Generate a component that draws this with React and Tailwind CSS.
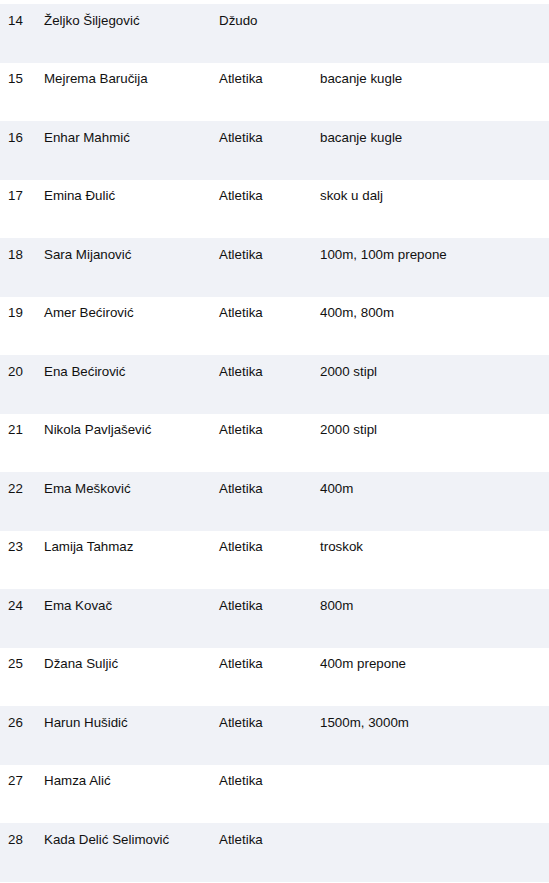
import React from "react";

const rows = [
  ["14", "Željko Šiljegović", "Džudo", ""],
  ["15", "Mejrema Baručija", "Atletika", "bacanje kugle"],
  ["16", "Enhar Mahmić", "Atletika", "bacanje kugle"],
  ["17", "Emina Đulić", "Atletika", "skok u dalj"],
  ["18", "Sara Mijanović", "Atletika", "100m, 100m prepone"],
  ["19", "Amer Bećirović", "Atletika", "400m, 800m"],
  ["20", "Ena Bećirović", "Atletika", "2000 stipl"],
  ["21", "Nikola Pavljašević", "Atletika", "2000 stipl"],
  ["22", "Ema Mešković", "Atletika", "400m"],
  ["23", "Lamija Tahmaz", "Atletika", "troskok"],
  ["24", "Ema Kovač", "Atletika", "800m"],
  ["25", "Džana Suljić", "Atletika", "400m prepone"],
  ["26", "Harun Hušidić", "Atletika", "1500m, 3000m"],
  ["27", "Hamza Alić", "Atletika", ""],
  ["28", "Kada Delić Selimović", "Atletika", ""],
];

export default function App() {
  return (
    <div
      className="w-[549px] h-[883px] bg-white pt-[4px] text-[13.33px] leading-4 text-[#111]"
      style={{ fontFamily: '"Liberation Sans", Arial, sans-serif' }}
    >
      {rows.map((r, i) => (
        <div
          key={r[0]}
          className={`grid grid-cols-[44px_175px_101px_1fr] h-[58.5px] pt-[8.5px] ${
            i % 2 === 0 ? "bg-[#f0f2f7]" : "bg-white"
          }`}
        >
          <div className="pl-2">{r[0]}</div>
          <div>{r[1]}</div>
          <div>{r[2]}</div>
          <div>{r[3]}</div>
        </div>
      ))}
    </div>
  );
}
